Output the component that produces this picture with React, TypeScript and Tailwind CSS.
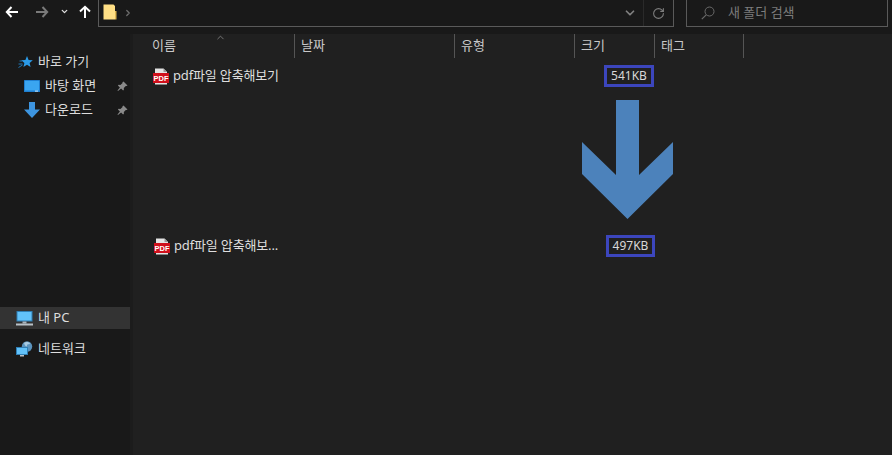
import { ChevronDown, ChevronUp, ChevronRight, RotateCw } from 'lucide-react';

const columns = [
  { label: '이름', width: 'w-[143px]', pad: 'pl-0' },
  { label: '날짜', width: 'w-[160px]', pad: 'pl-[6px]' },
  { label: '유형', width: 'w-[120px]', pad: 'pl-[6px]' },
  { label: '크기', width: 'w-[80px]', pad: 'pl-[6px]' },
  { label: '태그', width: 'w-[89px]', pad: 'pl-[6px]' },
];

function PdfIcon() {
  return (
    <svg width="16" height="17" viewBox="0 0 16 17" className="shrink-0">
      <path d="M2 0.500h8.500l3.500 3.500v12.500H2z" fill="#e4e4e4" />
      <path d="M10.500 0.500v3.500h3.500z" fill="#9a9a9a" />
      <rect x="0" y="5" width="16" height="10" fill="#d0101c" />
      <text x="8" y="12.800" textAnchor="middle" fontSize="7.500" fontWeight="700" fill="#fff" fontFamily="Liberation Sans, sans-serif">PDF</text>
    </svg>
  );
}

function PinIcon() {
  return (
    <svg width="11" height="11" viewBox="0 0 11 11">
      <path d="M6.500 0.500l4 4-1 .6-.7-.2-2 2.200.1 1.700-.8.7-2-2L1 10 .5 9.600l2.400-3.100-2-2 .8-.7 1.700.1 2.200-2-.2-.7z" fill="#8a8a8a" />
    </svg>
  );
}

function StarIcon() {
  return (
    <svg width="15" height="14" viewBox="0 0 15 14">
      <path d="M9 1l1.600 3.900 4.200.3-3.200 2.700 1 4.100L9 9.800 5.400 12l1-4.100-3.200-2.700 4.200-.3z" fill="#2b9be8" />
      <path d="M1.500 6h2.500M0.500 9h4M0.500 12.500l4-2.500" stroke="#2177b5" strokeWidth="1" />
    </svg>
  );
}

function DesktopIcon() {
  return (
    <svg width="16" height="12" viewBox="0 0 16 12">
      <rect x="0" y="0" width="16" height="12" rx="0.500" fill="#1f7fd1" />
      <rect x="1" y="1" width="14" height="9.500" fill="#3aa5f0" />
      <rect x="11" y="10.600" width="3" height="1" fill="#cfe8fb" />
    </svg>
  );
}

function DownloadIcon() {
  return (
    <svg width="16" height="16" viewBox="0 0 16 16">
      <path d="M5 0h6v7.500h5L8 16 0 7.500h5z" fill="#3d95e0" />
    </svg>
  );
}

function PcIcon() {
  return (
    <svg width="17" height="15" viewBox="0 0 17 15">
      <rect x="0.500" y="0" width="16" height="10.500" fill="#2f7fb5" />
      <rect x="1.500" y="1" width="14" height="8.500" fill="#62c2fa" />
      <rect x="6.500" y="10.500" width="4" height="2" fill="#a9b4bc" />
      <rect x="0" y="12.500" width="17" height="2" fill="#b9c1c7" />
    </svg>
  );
}

function NetworkIcon() {
  return (
    <svg width="17" height="16" viewBox="0 0 17 16">
      <circle cx="11" cy="5.500" r="5.200" fill="#5b93bd" />
      <path d="M8 2c2-1.500 5-1 6 .5-1 1.500-3 0-3 2s-2 1-3-2.500z" fill="#a9cbe2" />
      <rect x="0" y="6" width="12" height="8" fill="#2f7fb5" />
      <rect x="1" y="7" width="10" height="6" fill="#62c2fa" />
      <rect x="4" y="14" width="4" height="1.500" fill="#b9c1c7" />
    </svg>
  );
}

function SizeBox({ text, width }: { text: string; width: string }) {
  return (
    <div className={`flex items-center justify-center h-[22px] pb-[1px] border-[3px] border-[#3c46bd] text-[12px] text-[#d8d8d8] ${width}`}>
      {text}
    </div>
  );
}

export default function App() {
  return (
    <div
      className="relative flex flex-col w-[892px] h-[455px] overflow-hidden bg-[#202020] text-[13px] text-[#dedede]"
      style={{ fontFamily: '"Noto Sans", "Noto Sans CJK KR", sans-serif' }}
    >
      {/* toolbar */}
      <div className="flex h-[34px] shrink-0 bg-[#191919]">
        <div className="flex items-start w-[98px] pt-[5px] pl-[5px]">
          <svg width="14" height="14" viewBox="0 0 14 14">
            <path d="M13 7H2M6.500 2L1.800 7l4.700 5" fill="none" stroke="#fff" strokeWidth="2" />
          </svg>
          <svg width="14" height="14" viewBox="0 0 14 14" className="ml-[16px]">
            <path d="M1 7h11M7.500 2l4.700 5-4.700 5" fill="none" stroke="#7a7a7a" strokeWidth="2" />
          </svg>
          <ChevronDown size={9} strokeWidth={3.5} className="ml-[11px] mt-[2px] text-[#e0e0e0]" />
          <svg width="14" height="14" viewBox="0 0 14 14" className="ml-[9px]">
            <path d="M7 13V2M2 6.500L7 1.800l5 4.700" fill="none" stroke="#fff" strokeWidth="2" />
          </svg>
        </div>
        <div className="flex items-center w-[576px] h-[27px] border-b border-l border-r border-[#5a5a5a] pl-[4px]">
          <svg width="14" height="16" viewBox="0 0 14 16" className="mb-[2px]">
            <path d="M0.500 0.500h10l1.500 1.500v13.500H0.500z" fill="#ffdf85" />
            <path d="M12 7h1.500v8.500H12z" fill="#e0b64f" />
          </svg>
          <ChevronRight size={10} strokeWidth={3} className="ml-[6px] text-[#6e6e6e]" />
          <ChevronDown size={14} strokeWidth={3} className="ml-auto mr-[6px] text-[#808080]" />
          <div className="flex items-center justify-center w-[30px] h-full border-l border-[#2a2a2a]">
            <RotateCw size={13} strokeWidth={2} className="text-[#7d7d7d]" />
          </div>
        </div>
        <div className="flex items-center w-[202px] h-[27px] ml-[12px] border-b border-l border-r border-[#5a5a5a] pl-[14px]">
          <svg width="14" height="14" viewBox="0 0 14 14">
            <circle cx="8.500" cy="5.500" r="4.500" fill="none" stroke="#6a6a6a" strokeWidth="1" />
            <path d="M5.200 8.800L0.800 13.200" stroke="#6a6a6a" strokeWidth="1.200" />
          </svg>
          <span className="ml-[13px] text-[#7c7c7c]">새 폴더 검색</span>
        </div>
      </div>

      <div className="flex flex-1 min-h-0">
        {/* nav pane */}
        <div className="flex flex-col w-[133px] shrink-0 bg-[#191919] border-r-[3px] border-[#1c1c1c]">
          <div className="flex items-center h-[22px] mt-[17px] pl-[18px]">
            <StarIcon />
            <span className="ml-[5px]">바로 가기</span>
          </div>
          <div className="flex items-center h-[24px] mt-[1px] pl-[24px] pr-[2px]">
            <DesktopIcon />
            <span className="ml-[5px]">바탕 화면</span>
            <span className="ml-auto"><PinIcon /></span>
          </div>
          <div className="flex items-center h-[24px] pl-[24px] pr-[2px]">
            <DownloadIcon />
            <span className="ml-[5px]">다운로드</span>
            <span className="ml-auto"><PinIcon /></span>
          </div>
          <div className="flex items-center h-[22px] mt-[185px] pl-[16px] bg-[#333333]">
            <PcIcon />
            <span className="ml-[5px]">내 PC</span>
          </div>
          <div className="flex items-center h-[24px] mt-[8px] pl-[16px]">
            <NetworkIcon />
            <span className="ml-[5px]">네트워크</span>
          </div>
        </div>

        {/* file list */}
        <div className="relative flex-1 min-w-0">
          <div className="flex h-[24px] pl-[19px]">
            {columns.map(c => (
              <div key={c.label} className={`flex items-center pb-[1px] ${c.pad} ${c.width} border-r border-[#555555] text-[#c8c8c8]`}>
                {c.label}
              </div>
            ))}
          </div>
          <ChevronUp size={11} strokeWidth={1.500} className="absolute left-[82px] -top-[2px] text-[#9a9a9a]" />

          <div className="flex items-center h-[22px] mt-[7px] pl-[20px]">
            <PdfIcon />
            <span className="ml-[4px] w-[431px] tracking-[-0.15px]">pdf파일 압축해보기</span>
            <SizeBox text="541KB" width="w-[50px]" />
          </div>

          {/* arrow between rows */}
          <svg width="91" height="119" viewBox="0 0 91 119" className="mt-[13px] ml-[449px]">
            <path d="M34 0h23v75l34-33v32L45.500 119 0 74V42l34 33z" fill="#4c82bb" />
          </svg>

          <div className="flex items-center h-[22px] mt-[16px] pl-[21px]">
            <PdfIcon />
            <span className="ml-[4px] w-[432px] tracking-[-0.15px]">pdf파일 압축해보...</span>
            <SizeBox text="497KB" width="w-[49px]" />
          </div>
        </div>
      </div>
    </div>
  );
}
